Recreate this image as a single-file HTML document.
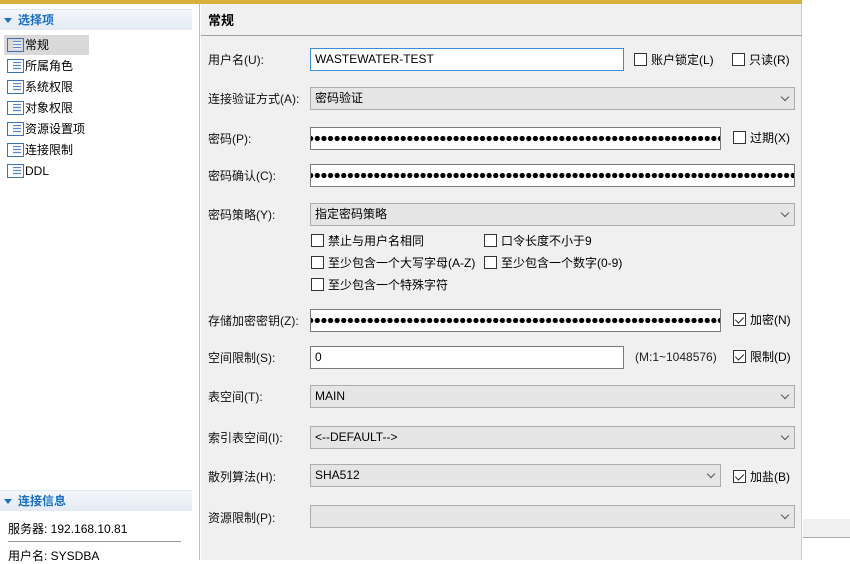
<!DOCTYPE html>
<html><head><meta charset="utf-8"><style>
*{margin:0;padding:0;box-sizing:border-box}
body{width:850px;height:560px;overflow:hidden;background:#fff;font-family:"Liberation Sans","Noto Sans CJK SC",sans-serif;font-size:12px;color:#000;position:relative}
.a{position:absolute;white-space:nowrap}
.gold{left:0;top:0;width:802px;height:4px;background:#d9b13a}
.left{left:0;top:4px;width:200px;height:556px;background:#fff;border-right:1px solid #bdbdbd}
.hdr{left:0;width:192px;height:21px;background:linear-gradient(#f4f7fb,#e3eaf3);border-top:1px solid #dfe6ee;color:#1a6fc4;font-weight:bold;font-size:12px;line-height:20px;padding-left:18px}
.tri{position:absolute;left:4px;top:8px;width:0;height:0;border-left:4px solid transparent;border-right:4px solid transparent;border-top:5px solid #1a6fc4}
.item{left:4px;height:20px;line-height:20px;padding-left:21px;font-size:12px}
.item i{position:absolute;left:3px;top:3px;width:17px;height:14px;border:1px solid #3b73b9;background:repeating-linear-gradient(#e8f0fa 0 2px,#5b88c4 2px 3px);background-clip:content-box;padding:2px 2px 2px 5px;background-color:#fff}
.right{left:201px;top:4px;width:601px;height:556px;background:#f0f0f0;border-right:1px solid #d8d0b0}
.lab{left:208px;font-size:12px;color:#111}
.inp{left:310px;height:23px;background:#fff;border:1px solid #7a7a7a;font-size:12px;line-height:21px;padding-left:4px}
.sel{left:310px;height:23px;background:#e5e5e5;border:1px solid #adadad;font-size:12px;line-height:21px;padding-left:4px}
.sel:after{content:"";position:absolute;right:6px;top:6px;width:5px;height:5px;border-right:1px solid #555;border-bottom:1px solid #555;transform:rotate(45deg)}
.dots{background:radial-gradient(circle at 3.3px 50%,#000 2.4px,transparent 2.8px) 3px 0/6.62px 100% repeat-x #fff}
.cb{font-size:12px;padding-left:17px;line-height:14px}
.cb:before{content:"";position:absolute;left:0;top:0;width:13px;height:13px;border:1px solid #333;background:#fff;box-sizing:border-box}
.ck:after{content:"";position:absolute;left:4px;top:2px;width:4px;height:7px;border-right:1.5px solid #222;border-bottom:1.5px solid #222;transform:rotate(45deg)}
</style></head><body>
<div class="a gold"></div>
<div class="a left"></div>
<div class="a hdr" style="top:9px"><span class="tri"></span>选择项</div>
<div class="a" style="left:4px;top:35px;width:85px;height:20px;background:#d9d9d9"></div>
<div class="a item" style="top:35px"><i></i>常规</div>
<div class="a item" style="top:56px"><i></i>所属角色</div>
<div class="a item" style="top:77px"><i></i>系统权限</div>
<div class="a item" style="top:98px"><i></i>对象权限</div>
<div class="a item" style="top:119px"><i></i>资源设置项</div>
<div class="a item" style="top:140px"><i></i>连接限制</div>
<div class="a item" style="top:161px"><i></i>DDL</div>
<div class="a hdr" style="top:490px"><span class="tri"></span>连接信息</div>
<div class="a" style="left:8px;top:520px">服务器: 192.168.10.81</div>
<div class="a" style="left:8px;top:541px;width:173px;height:1px;background:#999"></div>
<div class="a" style="left:8px;top:547px">用户名: SYSDBA</div>
<div class="a right"></div>
<div class="a" style="left:803px;top:519px;width:47px;height:19px;background:#f0f0f0;border-bottom:1px solid #aaa"></div>
<div class="a" style="left:208px;top:10px;font-weight:bold;font-size:13px">常规</div>
<div class="a" style="left:201px;top:35px;width:601px;height:1px;background:#a0a0a0"></div>

<div class="a lab" style="top:51px">用户名(U):</div>
<div class="a inp" style="top:48px;width:314px;border-color:#3c8ed3">WASTEWATER-TEST</div>
<div class="a cb" style="left:634px;top:53px">账户锁定(L)</div>
<div class="a cb" style="left:732px;top:53px">只读(R)</div>

<div class="a lab" style="top:90px">连接验证方式(A):</div>
<div class="a sel" style="top:87px;width:485px">密码验证</div>

<div class="a lab" style="top:130px">密码(P):</div>
<div class="a inp dots" style="top:127px;width:411px"></div>
<div class="a cb" style="left:733px;top:131px">过期(X)</div>

<div class="a lab" style="top:167px">密码确认(C):</div>
<div class="a inp dots" style="top:164px;width:485px"></div>

<div class="a lab" style="top:206px">密码策略(Y):</div>
<div class="a sel" style="top:203px;width:485px">指定密码策略</div>
<div class="a cb" style="left:311px;top:234px">禁止与用户名相同</div>
<div class="a cb" style="left:484px;top:234px">口令长度不小于9</div>
<div class="a cb" style="left:311px;top:256px">至少包含一个大写字母(A-Z)</div>
<div class="a cb" style="left:484px;top:256px">至少包含一个数字(0-9)</div>
<div class="a cb" style="left:311px;top:278px">至少包含一个特殊字符</div>

<div class="a lab" style="top:312px">存储加密密钥(Z):</div>
<div class="a inp dots" style="top:309px;width:411px"></div>
<div class="a cb ck" style="left:733px;top:313px">加密(N)</div>

<div class="a lab" style="top:349px">空间限制(S):</div>
<div class="a inp" style="top:346px;width:314px">0</div>
<div class="a" style="left:635px;top:350px;color:#222">(M:1~1048576)</div>
<div class="a cb ck" style="left:733px;top:350px">限制(D)</div>

<div class="a lab" style="top:388px">表空间(T):</div>
<div class="a sel" style="top:385px;width:485px">MAIN</div>

<div class="a lab" style="top:429px">索引表空间(I):</div>
<div class="a sel" style="top:426px;width:485px">&lt;--DEFAULT--&gt;</div>

<div class="a lab" style="top:468px">散列算法(H):</div>
<div class="a sel" style="top:464px;width:411px">SHA512</div>
<div class="a cb ck" style="left:733px;top:470px">加盐(B)</div>

<div class="a lab" style="top:509px">资源限制(P):</div>
<div class="a sel" style="top:505px;width:485px"></div>
</body></html>
